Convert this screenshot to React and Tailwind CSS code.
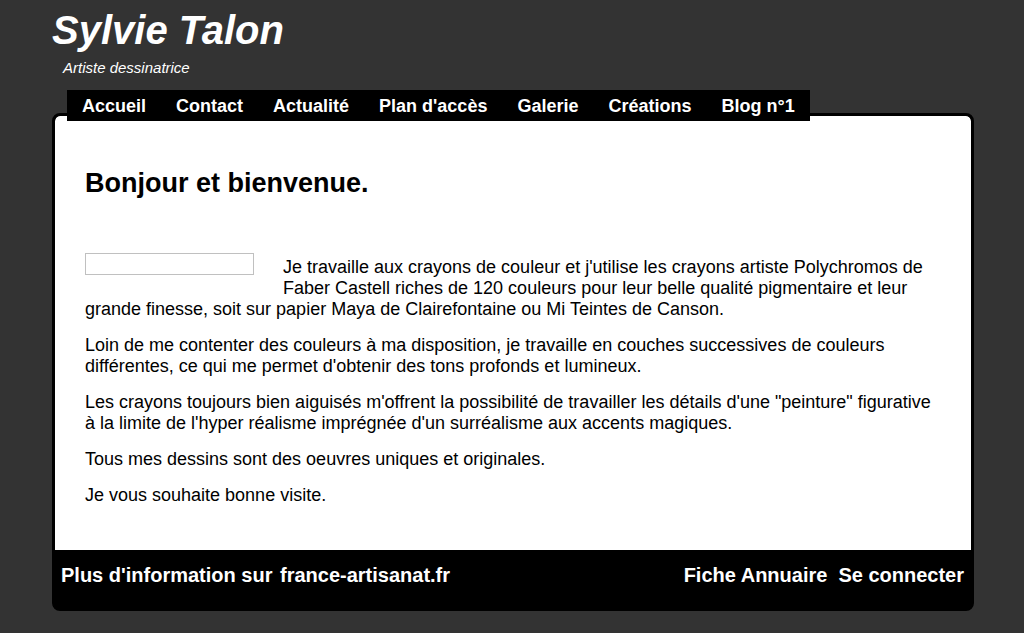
import React from "react";

const menu = ["Accueil", "Contact", "Actualité", "Plan d'accès", "Galerie", "Créations", "Blog n°1"];

const paragraphs = [
  "Loin de me contenter des couleurs à ma disposition, je travaille en couches successives de couleurs différentes, ce qui me permet d'obtenir des tons profonds et lumineux.",
  "Les crayons toujours bien aiguisés m'offrent la possibilité de travailler les détails d'une \"peinture\" figurative à la limite de l'hyper réalisme imprégnée d'un surréalisme aux accents magiques.",
  "Tous mes dessins sont des oeuvres uniques et originales.",
  "Je vous souhaite bonne visite.",
];

export default function App() {
  return (
    <div className="min-h-[633px] bg-[#333333] font-['Liberation_Sans',Arial,sans-serif] pt-[7px]">
      {/* Header */}
      <header>
        <h1 className="ml-[52px] text-[40px] leading-[46px] font-bold italic text-white">Sylvie Talon</h1>
        <p className="ml-[63px] mt-[6px] text-[15px] leading-[17px] italic text-white">Artiste dessinatrice</p>
      </header>

      {/* Menu */}
      <nav className="relative z-10 ml-[67px] mt-[14px] flex w-fit h-[31px] bg-black">
        {menu.map(m => (
          <a key={m} className="px-[15px] pt-[6px] text-[18px] leading-[21px] font-bold text-white">{m}</a>
        ))}
      </nav>

      {/* Main box */}
      <div className="ml-[52px] -mt-[8px] w-[922px] border-[3px] border-black rounded-[8px] bg-black overflow-hidden">
        <main className="bg-white rounded-t-[5px] px-[30px] pt-[52px] pb-[44px] text-black">
          <h2 className="text-[27px] leading-[31px] font-bold mb-[58px]">Bonjour et bienvenue.</h2>
          <div className="text-[18px] leading-[21px] space-y-[15px]">
            <p>
              <span className="float-left -mt-[4px] mr-[29px] mb-[10px] w-[169px] h-[22px] border border-[#c0c0c0]" />
              Je travaille aux crayons de couleur et j'utilise les crayons artiste Polychromos de Faber Castell riches de 120 couleurs pour leur belle qualité pigmentaire et leur grande finesse, soit sur papier Maya de Clairefontaine ou Mi Teintes de Canson.
            </p>
            {paragraphs.map((t, i) => (
              <p key={i}>{t}</p>
            ))}
          </div>
        </main>

        {/* Footer */}
        <footer className="h-[58px] flex justify-between pl-[6px] pr-[7px] pt-[14px] text-[20px] leading-[23px] font-bold text-white">
          <div>
            Plus d'information sur <a className="ml-[2px]">france-artisanat.fr</a>
          </div>
          <div className="flex">
            <a>Fiche Annuaire</a>
            <a className="ml-[11px]">Se connecter</a>
          </div>
        </footer>
      </div>
    </div>
  );
}
